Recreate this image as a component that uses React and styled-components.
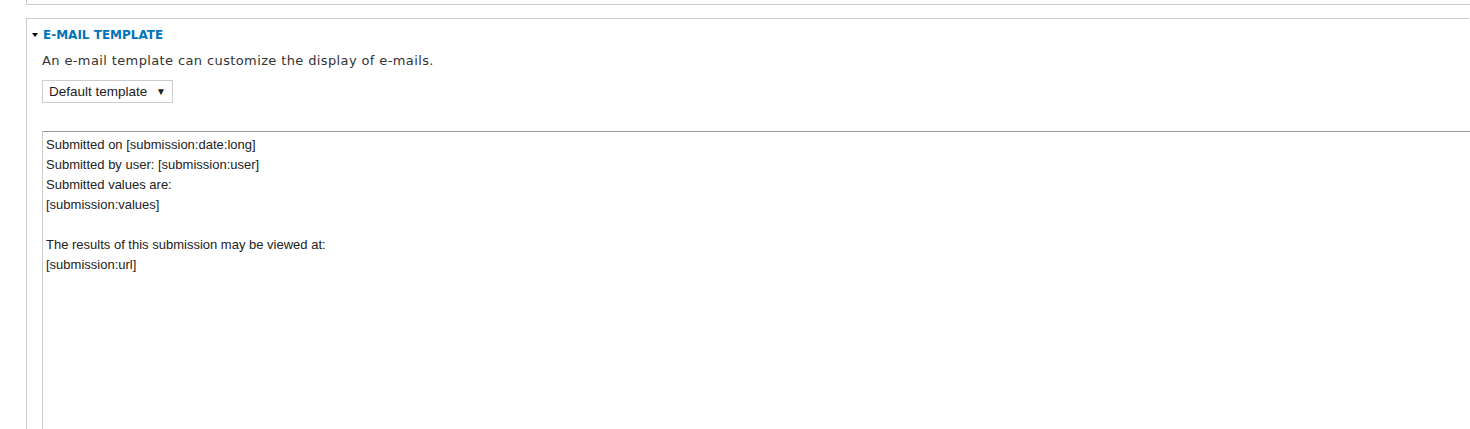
import React from "react";
import styled, { createGlobalStyle } from "styled-components";

const Global = createGlobalStyle`
  html, body { margin: 0; padding: 0; background: #fff; }
  body { overflow: hidden; }
`;

const Page = styled.div`
  width: 1470px;
  height: 429px;
  overflow: hidden;
  padding-left: 26px;
  box-sizing: border-box;
  font-family: "DejaVu Sans", sans-serif;
  color: #333;
`;

const TopFieldset = styled.div`
  width: 1443px;
  height: 4px;
  border-left: 1px solid #ccc;
  border-bottom: 1px solid #ccc;
`;

const Fieldset = styled.section`
  margin-top: 13px;
  width: 1443px;
  height: 420px;
  border-top: 1px solid #ccc;
  border-left: 1px solid #ccc;
  padding: 8px 0 0 5px;
  box-sizing: border-box;
`;

const Legend = styled.div`
  display: flex;
  align-items: center;
  gap: 5px;
  height: 16px;
  color: #0074bd;
  font-weight: bold;
  font-size: 12px;
  text-transform: uppercase;
`;

const Triangle = styled.span`
  width: 0;
  height: 0;
  border-left: 3px solid transparent;
  border-right: 3px solid transparent;
  border-top: 4px solid #000;
`;

const Body = styled.div`
  padding-left: 10px;
`;

const Description = styled.p`
  margin: 10px 0 0;
  font-size: 13px;
  letter-spacing: 0.38px;
  line-height: 16px;
  color: #333;
`;

const Select = styled.div`
  margin-top: 11px;
  width: 131px;
  height: 23px;
  box-sizing: border-box;
  border: 1px solid #ccc;
  display: flex;
  align-items: center;
  justify-content: space-between;
  padding: 0 6px 0 6px;
  font-family: "Liberation Sans", Arial, sans-serif;
  font-size: 13.5px;
  color: #222;
`;

const Arrow = styled.span`
  font-size: 10px;
  color: #222;
`;

const Textarea = styled.div`
  margin-top: 28px;
  width: 1430px;
  height: 320px;
  box-sizing: border-box;
  border-top: 1px solid #999;
  border-left: 1px solid #ccc;
  padding: 3px 3px;
  font-family: "Liberation Sans", Arial, sans-serif;
  font-size: 13px;
  line-height: 20px;
  color: #222;
  white-space: pre;
`;

const text = `Submitted on [submission:date:long]
Submitted by user: [submission:user]
Submitted values are:
[submission:values]

The results of this submission may be viewed at:
[submission:url]`;

export default function App() {
  return (
    <>
      <Global />
      <Page>
        <TopFieldset />
        <Fieldset>
          <Legend>
            <Triangle />
            <span>E-mail template</span>
          </Legend>
          <Body>
            <Description>An e-mail template can customize the display of e-mails.</Description>
            <Select>
              <span>Default template</span>
              <Arrow>▼</Arrow>
            </Select>
            <Textarea>{text}</Textarea>
          </Body>
        </Fieldset>
      </Page>
    </>
  );
}
